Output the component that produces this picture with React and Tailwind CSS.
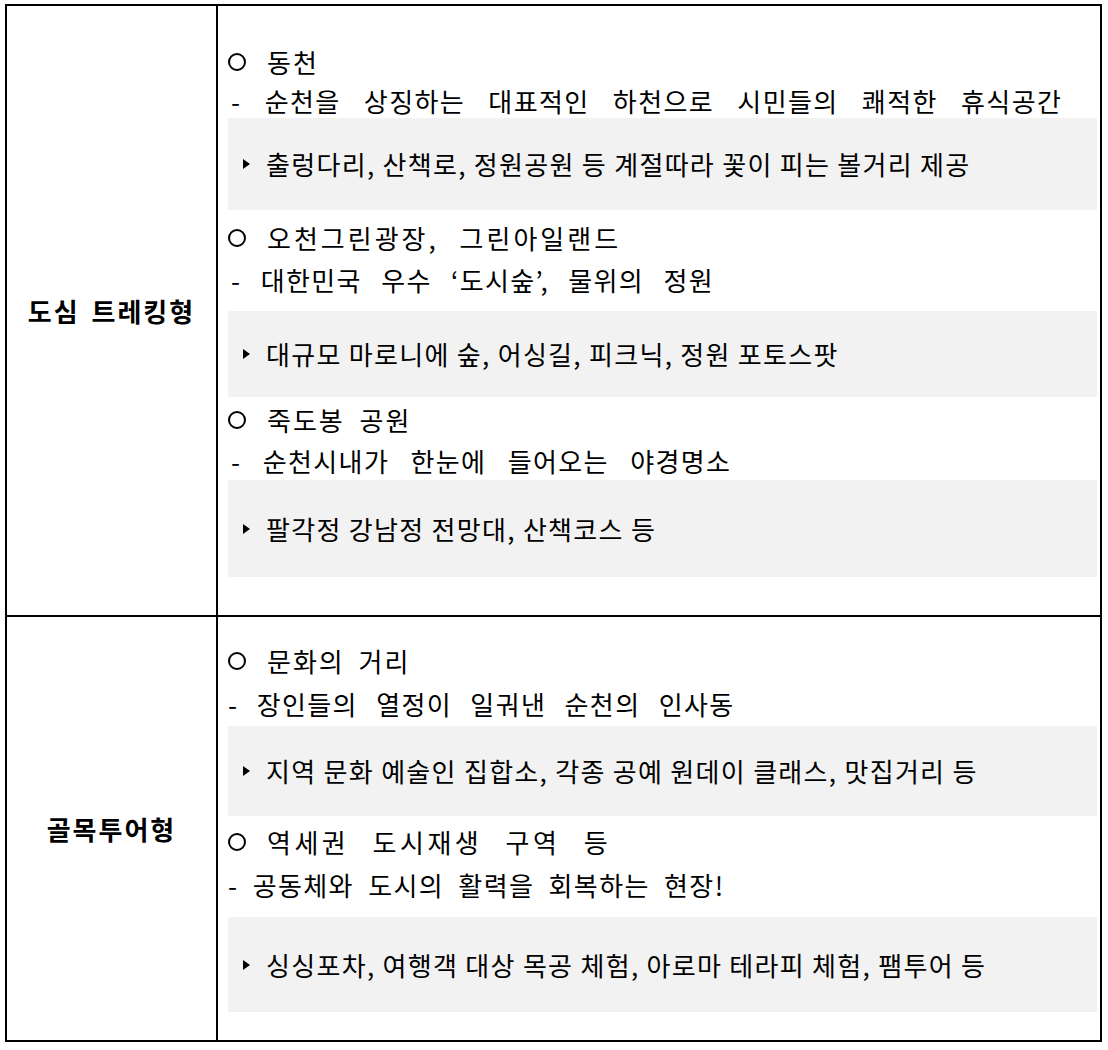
import React from 'react';

const rows = [
  {
    label: '도심 트레킹형',
    pad: 'pt-[35px] pb-[38px]',
    items: [
      {
        title: '동천',
        titleWs: 'tracking-[2px] [word-spacing:14px]',
        desc: '- 순천을 상징하는 대표적인 하천으로 시민들의 쾌적한 휴식공간',
        note: '출렁다리, 산책로, 정원공원 등 계절따라 꽃이 피는 볼거리 제공',
        descH: 'h-[35px] pl-[3px] [word-spacing:16px]',
        box: 'h-[92px] mb-[7px]',
      },
      {
        title: '오천그린광장, 그린아일랜드',
        titleWs: 'tracking-[3px] [word-spacing:12px]',
        desc: '- 대한민국 우수 ‘도시숲’, 물위의 정원',
        note: '대규모 마로니에 숲, 어싱길, 피크닉, 정원 포토스팟',
        descH: 'h-[52px] pl-[3px] pb-[10px] [word-spacing:12px]',
        box: 'h-[86px] mb-[2px]',
      },
      {
        title: '죽도봉 공원',
        titleWs: 'tracking-[2px] [word-spacing:7px]',
        desc: '- 순천시내가 한눈에 들어오는 야경명소',
        note: '팔각정 강남정 전망대, 산책코스 등',
        descH: 'h-[39px] pl-[3px] [word-spacing:14px]',
        box: 'h-[97px]',
      },
    ],
  },
  {
    label: '골목투어형',
    pad: 'pt-[23px] pb-[28px]',
    items: [
      {
        title: '문화의 거리',
        titleWs: 'tracking-[2px] [word-spacing:6px]',
        desc: '- 장인들의 열정이 일궈낸 순천의 인사동',
        note: '지역 문화 예술인 집합소, 각종 공예 원데이 클래스, 맛집거리 등',
        descH: 'h-[44px] [word-spacing:11px]',
        box: 'h-[90px] mb-[5px]',
      },
      {
        title: '역세권 도시재생 구역 등',
        titleWs: 'tracking-[3.5px] [word-spacing:14px]',
        desc: '- 공동체와 도시의 활력을 회복하는 현장!',
        note: '싱싱포차, 여행객 대상 목공 체험, 아로마 테라피 체험, 팸투어 등',
        descH: 'h-[54px] pb-[10px] [word-spacing:7px]',
        box: 'h-[95px]',
      },
    ],
  },
];

function Arrow() {
  return (
    <svg width="7" height="10" viewBox="0 0 7 10" className="shrink-0">
      <path d="M0 0 L7 5 L0 10 Z" fill="#000" />
    </svg>
  );
}

function Item({ item }) {
  return (
    <div className="flex flex-col">
      <div className={`h-[42px] flex items-center whitespace-pre ${item.titleWs}`}>
        <span className="w-[18px] h-[18px] rounded-full border-2 border-black shrink-0" />
        <span className="ml-[21px]">{item.title}</span>
      </div>
      <div className={`flex items-center whitespace-pre tracking-[1.4px] ${item.descH}`}>
        {item.desc}
      </div>
      <div className={`bg-[#f2f2f2] flex items-center pl-[15px] whitespace-pre tracking-[1.3px] ${item.box}`}>
        <Arrow />
        <span className="ml-[16px]">{item.note}</span>
      </div>
    </div>
  );
}

export default function App() {
  return (
    <div
      className="bg-white min-h-screen pt-[4px] pl-[5px] text-black text-[26px] leading-none"
      style={{ fontFamily: '"Noto Sans CJK KR", "Noto Sans", sans-serif' }}
    >
      <div className="w-[1097px] border-2 border-black">
        {rows.map((row, i) => (
          <div
            key={row.label}
            className={`grid grid-cols-[211px_1fr] ${i > 0 ? 'border-t-2 border-black' : ''}`}
          >
            <div className="border-r-2 border-black flex items-center justify-center font-bold text-[26px] tracking-[2px] whitespace-pre [word-spacing:4px]">
              {row.label}
            </div>
            <div className={`pl-[10px] pr-[3px] ${row.pad}`}>
              {row.items.map((item) => (
                <Item key={item.title} item={item} />
              ))}
            </div>
          </div>
        ))}
      </div>
    </div>
  );
}
